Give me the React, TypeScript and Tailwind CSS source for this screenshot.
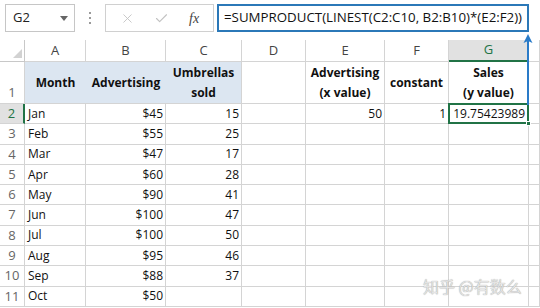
import { X, Check } from 'lucide-react';

const rows = [
  ['Jan', '$45', '15'],
  ['Feb', '$55', '25'],
  ['Mar', '$47', '17'],
  ['Apr', '$60', '28'],
  ['May', '$90', '41'],
  ['Jun', '$100', '47'],
  ['Jul', '$100', '50'],
  ['Aug', '$95', '46'],
  ['Sep', '$88', '37'],
  ['Oct', '$50', ''],
];

const letters = ['A', 'B', 'C', 'D', 'E', 'F', 'G', ''];

const grid = 'border-r border-b border-[#d4d4d4]';

export default function App() {
  return (
    <div className="relative w-[540px] h-[308px] overflow-hidden bg-white font-['Open_Sans',sans-serif] text-[#111]">
      {/* formula bar */}
      <div className="flex items-stretch h-[28px] mt-[4px] mb-[8px]">
        <div className="ml-[5px] w-[70px] border border-[#c6c6c6] flex items-center justify-between pl-[7px] pr-[6px]">
          <span className="text-[13px] text-[#222]">G2</span>
          <svg width="8" height="5" viewBox="0 0 8 5"><polygon points="0,0 8,0 4,5" fill="#666" /></svg>
        </div>
        <div className="w-[30px] flex flex-col items-center justify-center gap-[3px]">
          <span className="w-[2px] h-[2px] bg-[#9a9a9a]" />
          <span className="w-[2px] h-[2px] bg-[#9a9a9a]" />
          <span className="w-[2px] h-[2px] bg-[#9a9a9a]" />
        </div>
        <div className="w-[109px] border border-[#d0d0d0] flex items-center justify-around px-[4px]">
          <X size={15} strokeWidth={1.4} color="#c2c2c2" />
          <Check size={15} strokeWidth={1.8} color="#c2c2c2" />
          <span className="font-['Liberation_Serif',serif] italic text-[14px] text-[#444]">fx</span>
        </div>
        <div className="ml-[3px] w-[312px] border-2 border-[#2b78b8] flex items-center pl-[5px]">
          <span className="text-[13.3px] text-[#111] whitespace-nowrap">=SUMPRODUCT(LINEST(C2:C10, B2:B10)*(E2:F2))</span>
        </div>
      </div>

      {/* sheet */}
      <div className="grid grid-cols-[25px_61px_80px_76px_64px_79px_64px_80px_1fr] grid-rows-[22px_42px_repeat(10,20.3px)] text-[12px]">
        {/* column headers */}
        <div className="relative border-r border-b border-[#c8c8c8]">
          <svg className="absolute right-[2px] bottom-[3px]" width="9" height="9" viewBox="0 0 9 9"><polygon points="9,0 9,9 0,9" fill="#d2d2d2" /></svg>
        </div>
        {letters.map((l, i) =>
          l === 'G' ? (
            <div key={i} className="bg-[#e1e1e1] border-r border-[#c8c8c8] border-b-2 border-b-[#217346] flex items-center justify-center text-[13px] text-[#217346]">G</div>
          ) : (
            <div key={i} className="border-r border-b border-[#d4d4d4] flex items-center justify-center text-[13px] text-[#444]">{l}</div>
          )
        )}

        {/* row 1 */}
        <div className={`${grid} flex items-end justify-center pb-[1px] text-[13px] text-[#666]`}>1</div>
        <div className="bg-[#dce6f1] border-b border-[#d4d4d4] flex items-center justify-center font-bold">Month</div>
        <div className="bg-[#dce6f1] border-b border-[#d4d4d4] flex items-center justify-center font-bold">Advertising</div>
        <div className={`bg-[#dce6f1] ${grid} flex items-center justify-center text-center font-bold leading-[20px]`}>Umbrellas<br />sold</div>
        <div className={grid} />
        <div className={`${grid} flex items-center justify-center text-center font-bold leading-[20px]`}>Advertising<br />(x value)</div>
        <div className={`${grid} flex items-center justify-center font-bold`}>constant</div>
        <div className={`${grid} flex items-center justify-center text-center font-bold leading-[20px]`}>Sales<br />(y value)</div>
        <div className={grid} />

        {/* data rows */}
        {rows.map((r, i) => (
          <div key={i} className="contents">
            {i === 0 ? (
              <div className="bg-[#e1e1e1] border-r-2 border-r-[#217346] border-b border-[#d4d4d4] flex items-center justify-center text-[13px] text-[#217346]">2</div>
            ) : (
              <div className={`${grid} flex items-center justify-center text-[13px] text-[#666]`}>{i + 2}</div>
            )}
            <div className={`${grid} flex items-center pl-[3px]`}>{r[0]}</div>
            <div className={`${grid} flex items-center justify-end pr-[2px]`}>{r[1]}</div>
            <div className={`${grid} flex items-center justify-end pr-[2px]`}>{r[2]}</div>
            <div className={grid} />
            <div className={`${grid} flex items-center justify-end pr-[2px]`}>{i === 0 ? '50' : ''}</div>
            <div className={`${grid} flex items-center justify-end pr-[2px]`}>{i === 0 ? '1' : ''}</div>
            {i === 0 ? (
              <div className={`${grid} relative flex items-center justify-end pr-[3px]`}>
                19.75423989
                <div className="absolute -left-px -top-px -right-px -bottom-px border-2 border-[#217346]" />
                <div className="absolute -right-[3px] -bottom-[3px] w-[5px] h-[5px] bg-[#217346] border border-white" />
              </div>
            ) : (
              <div className={grid} />
            )}
            <div className={grid} />
          </div>
        ))}
      </div>

      {/* blue arrow pointing to the formula bar */}
      <svg className="absolute left-[522px] top-[33px]" width="12" height="72" viewBox="0 0 12 72">
        <rect x="5" y="6" width="2" height="66" fill="#2a7bc8" />
        <polygon points="6,1 1.5,10 6,8 10.5,10" fill="#2a7bc8" />
      </svg>

      {/* watermark */}
      <div className="absolute left-[423px] top-[274px] text-[16px] text-[#e4e4e4] font-['Noto_Sans_CJK_SC',sans-serif] [text-shadow:0_0_1px_#8a8a8a]">
        知乎 @有数么
      </div>
    </div>
  );
}
